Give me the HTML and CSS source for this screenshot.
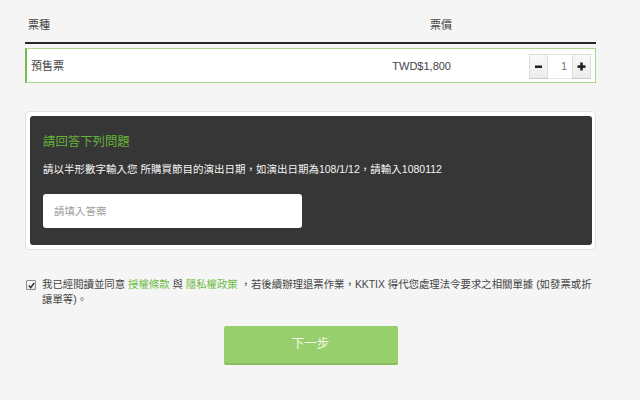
FILE: index.html
```
<!DOCTYPE html>
<html lang="zh-Hant">
<head>
<meta charset="utf-8">
<link rel="stylesheet" href="styles.css">
</head>
<body>
<div class="page">
  <div class="thead">
    <div class="col-name">票種</div>
    <div class="col-price">票價</div>
    <div class="col-qty"></div>
  </div>
  <div class="trow">
    <div class="col-name">預售票</div>
    <div class="col-price">TWD$1,800</div>
    <div class="col-qty">
      <div class="stepper">
        <span class="step-btn"><svg width="9" height="9" viewBox="0 0 9 9"><rect x="1" y="3.5" width="7" height="2.5" fill="#222"/></svg></span>
        <span class="step-val">1</span>
        <span class="step-btn"><svg width="9" height="9" viewBox="0 0 9 9"><rect x="0.5" y="3.3" width="8" height="2.6" fill="#222"/><rect x="3.2" y="0.5" width="2.6" height="8" fill="#222"/></svg></span>
      </div>
    </div>
  </div>

  <div class="card">
    <div class="question">
      <div class="q-title">請回答下列問題</div>
      <div class="q-text">請以半形數字輸入您 所購買節目的演出日期，如演出日期為108/1/12，請輸入1080112</div>
      <div class="q-input">請填入答案</div>
    </div>
  </div>

  <div class="agree">
    <span class="check"><svg width="7" height="7" viewBox="0 0 7 7"><path d="M0.8 3.6 L2.7 5.6 L6.2 1" fill="none" stroke="#333" stroke-width="1.5"/></svg></span>
    <p class="agree-text">我已經閱讀並同意 <span class="link">授權條款</span> 與 <span class="link">隱私權政策</span> ，若後續辦理退票作業，KKTIX 得代您處理法令要求之相關單據 (如發票或折讓單等)。</p>
  </div>

  <div class="actions">
    <div class="btn-next">下一步</div>
  </div>
</div>
</body>
</html>
```
FILE: styles.css
```
html, body {
  margin: 0;
  padding: 0;
}
body {
  background: #f5f5f5;
  font-family: "Liberation Sans", "Noto Sans CJK TC", sans-serif;
  color: #333;
  font-size: 11px;
  width: 640px;
  height: 400px;
  overflow: hidden;
}
.page {
  margin-left: 25px;
  width: 571px;
}
.thead {
  display: grid;
  grid-template-columns: 1fr auto 144px;
  align-items: start;
  height: 44px;
  box-sizing: border-box;
  padding: 18px 0 0 3px;
  line-height: 14px;
  border-bottom: 2px solid #262626;
  color: #444;
}
.trow {
  display: grid;
  grid-template-columns: 1fr auto 140px;
  align-items: center;
  margin-top: 4px;
  height: 35px;
  box-sizing: border-box;
  background: #fff;
  border: 1px solid #a9d88c;
  border-left: 2px solid #76bb4e;
  padding: 1px 4px 0 4px;
  line-height: 16px;
  color: #444;
}
.col-price {
  text-align: right;
}
.col-qty {
  display: flex;
  justify-content: flex-end;
}
.stepper {
  display: flex;
  height: 25px;
}
.step-btn {
  width: 19px;
  height: 25px;
  box-sizing: border-box;
  display: flex;
  align-items: center;
  justify-content: center;
  background: linear-gradient(#f8f8f8, #ececec);
  border: 1px solid #dcdcdc;
  border-bottom-color: #c8c8c8;
}
.step-val {
  width: 24px;
  height: 25px;
  box-sizing: border-box;
  background: #fff;
  border-top: 1px solid #e6e6e6;
  border-bottom: 1px solid #e6e6e6;
  text-align: right;
  padding-right: 5px;
  line-height: 23px;
  font-size: 11px;
  color: #777;
}
.card {
  margin-top: 28px;
  background: #fff;
  border: 1px solid #e3e3e3;
  border-radius: 4px;
  padding: 4px 3px 4px 4px;
}
.question {
  background: #363636;
  border-radius: 3px;
  padding: 18px 13px 17px 13px;
  height: 129px;
  box-sizing: border-box;
}
.q-title {
  color: #66b23a;
  font-size: 12.4px;
  line-height: 16px;
}
.q-text {
  color: #f4f4f4;
  font-size: 10.5px;
  line-height: 15px;
  margin-top: 12px;
  white-space: nowrap;
}
.q-input {
  margin-top: 17px;
  width: 259px;
  height: 34px;
  box-sizing: border-box;
  background: #fff;
  border-radius: 3px;
  padding-left: 11px;
  line-height: 34px;
  color: #a0a0a0;
  font-size: 10.5px;
}
.agree {
  display: flex;
  align-items: flex-start;
  margin-top: 27px;
}
.check {
  flex: none;
  width: 8px;
  height: 8px;
  margin: 3px 6px 0 1px;
  border: 1px solid #8a8a8a;
  border-radius: 1px;
  background: linear-gradient(#fdfdfd, #e4e4e4);
  display: flex;
  align-items: center;
  justify-content: center;
}
.agree-text {
  margin: 0;
  font-size: 10.4px;
  line-height: 15px;
  color: #444;
  flex: 1;
}
.link {
  color: #6fbb45;
}
.actions {
  display: flex;
  justify-content: center;
  margin-top: 19px;
}
.btn-next {
  width: 174px;
  height: 39px;
  box-sizing: border-box;
  background: #98cf6d;
  border-bottom: 2px solid #86bd5c;
  border-radius: 2px;
  color: #f4faef;
  font-size: 12.5px;
  line-height: 37px;
  text-align: center;
}
```
